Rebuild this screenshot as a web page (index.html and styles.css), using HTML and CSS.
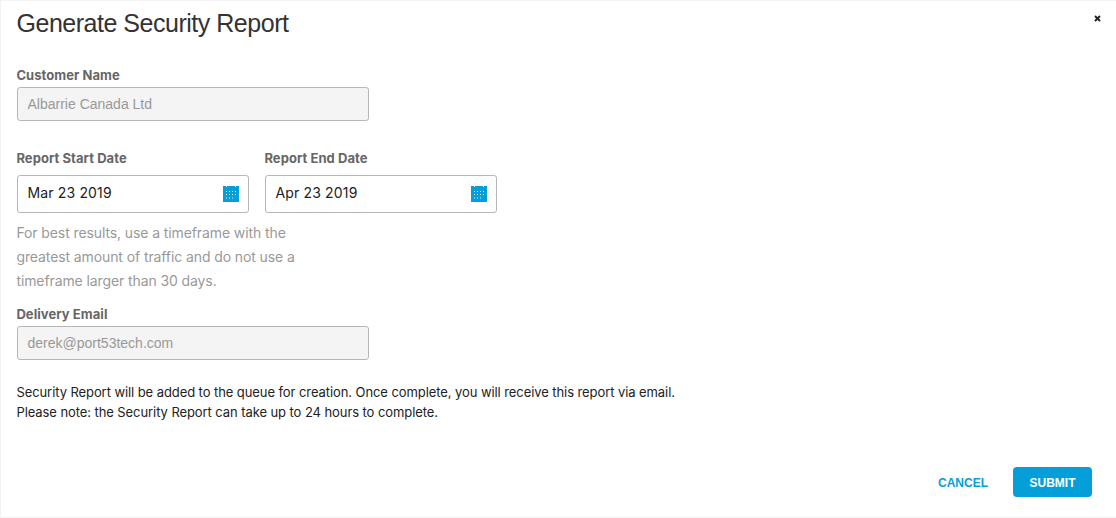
FILE: index.html
```html
<!DOCTYPE html>
<html lang="en">
<head>
<meta charset="utf-8">
<title>Generate Security Report</title>
<link rel="stylesheet" href="styles.css">
</head>
<body>
<main class="dialog">
  <header class="header">
    <h1 class="title">Generate Security Report</h1>
    <button class="close" aria-label="Close"><svg width="7" height="7" viewBox="0 0 7 7"><path d="M1 1L6 6M6 1L1 6"/></svg></button>
  </header>
  <section class="field customer">
    <div class="label">Customer Name</div>
    <div class="input disabled">Albarrie Canada Ltd</div>
  </section>
  <section class="dates">
    <div class="date-field">
      <div class="label">Report Start Date</div>
      <div class="input date"><span>Mar 23 2019</span>
        <svg class="calendar" width="16" height="16" viewBox="0 0 16 16" shape-rendering="crispEdges"><path fill="#049fd9" d="M0 0h16v16H0z"/><path fill="#fff" d="M3 0h1v1H3zM12 0h1v1h-1zM3 5h1v1H3zM6 5h1v1H6zM9 5h1v1H9zM12 5h1v1h-1zM3 8h1v1H3zM6 8h1v1H6zM9 8h1v1H9zM12 8h1v1h-1z"/><path fill="#73c6e7" d="M3 11h1v2H3zM6 11h1v2H6zM9 11h1v2H9z"/></svg>
      </div>
    </div>
    <div class="date-field">
      <div class="label">Report End Date</div>
      <div class="input date"><span>Apr 23 2019</span>
        <svg class="calendar" width="16" height="16" viewBox="0 0 16 16" shape-rendering="crispEdges"><path fill="#049fd9" d="M0 0h16v16H0z"/><path fill="#fff" d="M3 0h1v1H3zM12 0h1v1h-1zM3 5h1v1H3zM6 5h1v1H6zM9 5h1v1H9zM12 5h1v1h-1zM3 8h1v1H3zM6 8h1v1H6zM9 8h1v1H9zM12 8h1v1h-1z"/><path fill="#73c6e7" d="M3 11h1v2H3zM6 11h1v2H6zM9 11h1v2H9z"/></svg>
      </div>
    </div>
  </section>
  <p class="hint">For best results, use a timeframe with the<br>greatest amount of traffic and do not use a<br>timeframe larger than 30 days.</p>
  <section class="field email">
    <div class="label">Delivery Email</div>
    <div class="input disabled">derek@port53tech.com</div>
  </section>
  <p class="note">Security Report will be added to the queue for creation. Once complete, you will receive this report via email.<br>Please note: the Security Report can take up to 24 hours to complete.</p>
  <footer class="actions">
    <button class="cancel">CANCEL</button>
    <button class="submit">SUBMIT</button>
  </footer>
</main>
</body>
</html>
```
FILE: styles.css
```css
* { box-sizing: border-box; }
body { margin: 0; background: #fff; font-family: "Liberation Sans", Arial, sans-serif; }
button { border: 0; padding: 0; background: none; font: inherit; }
.dialog {
  height: 518px;
  display: flex;
  flex-direction: column;
  padding: 0 0 0 16px;
  border: 1px solid #f3f3f3;
  border-right: 0;
}
.header { display: flex; justify-content: space-between; height: 66px; padding-right: 15px; }
.title { margin: 6px 0 0 -0.5px; font-size: 25px; line-height: 32px; font-weight: 400; color: #333; letter-spacing: -0.48px; white-space: nowrap; }
.close { height: 7px; margin-top: 14px; display: flex; }
.close path { stroke: #222; stroke-width: 1.9; }
.label { height: 20px; margin-left: -0.6px; font: 650 13px/17px Inter, sans-serif; letter-spacing: 0.06px; color: #666; white-space: nowrap; }
.input { display: flex; align-items: center; border: 1px solid #b6b6b6; border-radius: 3px; padding: 0 9px 0 9.5px; white-space: nowrap; }
.disabled { width: 352px; height: 34px; padding-bottom: 1px; background: #f4f4f4; color: #999; font-size: 14px; }
.customer { height: 83px; }
.dates { display: flex; gap: 16px; }
.date-field .label { height: 25px; }
.date { width: 232px; height: 38px; justify-content: space-between; font: 14px/18px Inter, sans-serif; color: #222; letter-spacing: 0.15px; }
.date span { padding-bottom: 2px; }
.hint { margin: 8px 0 13px -0.6px; font: 14px/24px Inter, sans-serif; color: #999; letter-spacing: -0.1px; white-space: nowrap; }
.email { height: 76px; }
.note { margin: 0 0 0 -0.6px; font: 13px/20px Inter, sans-serif; color: #222; letter-spacing: -0.08px; white-space: nowrap; }
.actions { display: flex; justify-content: flex-end; align-items: center; gap: 25px; margin-top: 45px; padding-right: 24px; font-weight: 700; font-size: 12px; }
.cancel { padding-top: 1px; color: #049fd9; }
.submit { width: 79px; height: 30px; padding-top: 1px; border-radius: 4px; background: #049fd9; color: #fff; }
```
